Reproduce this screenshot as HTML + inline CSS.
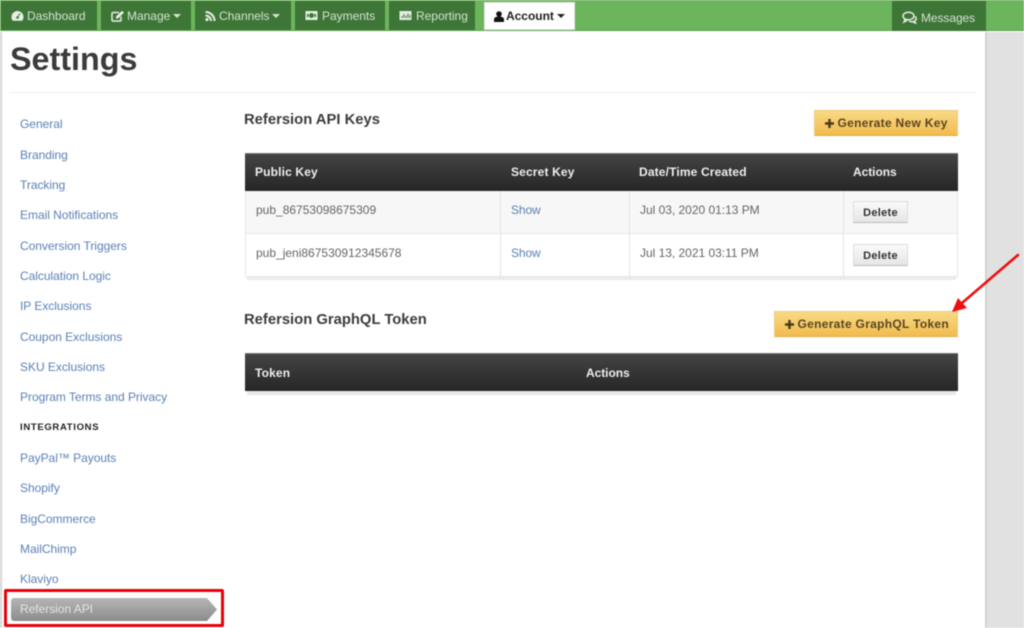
<!DOCTYPE html>
<html><head><meta charset="utf-8"><style>
*{box-sizing:border-box}
html,body{margin:0;padding:0}
body{width:1024px;height:628px;overflow:hidden;background:#fff;position:relative;font-family:"Liberation Sans",sans-serif;font-size:12px;color:#555}
#w{position:absolute;left:0;top:0;width:1024px;height:628px;filter:blur(.5px);overflow:hidden}
.a{position:absolute;white-space:nowrap}
.nb{position:absolute;top:1px;height:29px;background:#3d7636;color:#d5e3d3;line-height:31px;font-size:12px;letter-spacing:-.02px;white-space:nowrap}
.nb svg{position:absolute;top:9px}
.nb span{position:absolute;top:0}
.car{display:inline-block;border-left:4px solid transparent;border-right:4px solid transparent;border-top:4px solid currentColor;vertical-align:2px;margin-left:3px}
.sl{position:absolute;left:20px;color:#5b80b5;font-size:12px;line-height:16px;letter-spacing:-.03px;white-space:nowrap}
.th{position:absolute;top:-1px;line-height:38px;color:#eee;font-weight:bold;font-size:12px;letter-spacing:.15px;white-space:nowrap}
.hd{position:absolute;height:38px;background:linear-gradient(#444,#262626);border-top:1px solid #777}
.td{position:absolute;font-size:12px;color:#666;white-space:nowrap;line-height:16px}
.btn{position:absolute;background:linear-gradient(#f8da87,#f2bb4e);border:1px solid #eecb7c;border-bottom-color:#e0ac45;color:#5a4520;font-weight:bold;font-size:12px;letter-spacing:.3px;white-space:nowrap;text-align:center}
.btn svg{position:absolute;top:7px}
.btn span{position:absolute;top:0}
.del{position:absolute;left:853px;width:55px;height:22px;background:linear-gradient(#fafafa,#e6e6e6);border:1px solid #ddd;border-bottom-color:#bbb;color:#333;font-weight:bold;font-size:11px;line-height:22px;text-align:center;letter-spacing:.3px}
.h3{position:absolute;left:244px;font-size:14.8px;font-weight:bold;color:#3c3c3c;white-space:nowrap}
</style></head><body><div id="w">
<div class="a" style="left:0;top:0;width:1024px;height:31px;background:#6db55c;border-bottom:1px solid #5da04d"></div>
<div class="a" style="left:985px;top:32px;width:39px;height:596px;background:#e1e1e1;border-left:2px solid #d2d2d2"></div>
<div class="a" style="left:0;top:32px;width:2px;height:596px;background:#d6d6d6"></div>

<div class="nb" style="left:1px;width:96px"><svg style="left:10px" width="13" height="12" viewBox="0 0 13 12"><path d="M6.500 1a6 6 0 0 0-6 6c0 1.500.5 2.800 1.300 3.800h9.400A6 6 0 0 0 12.500 7a6 6 0 0 0-6-6z" fill="#e6eee4"/><circle cx="6.500" cy="7.500" r="1.300" fill="#3d7636"/><path d="M6.500 7.500 9 3.500" stroke="#3d7636"/></svg><span style="left:26px">Dashboard</span></div>
<div class="nb" style="left:101px;width:90px"><svg style="left:10px" width="14" height="12" viewBox="0 0 14 12"><path d="M10 6.500V10a1 1 0 0 1-1 1H2a1 1 0 0 1-1-1V3.500a1 1 0 0 1 1-1h6" fill="none" stroke="#e6eee4" stroke-width="1.500"/><path d="M5 6.500 11 .8l2 2L7 8.500H5z" fill="#e6eee4"/></svg><span style="left:26px">Manage<i class="car" style="margin-left:2.500px"></i></span></div>
<div class="nb" style="left:195px;width:96px"><svg style="left:10px" width="11" height="12" viewBox="0 0 11 12"><circle cx="2" cy="9.500" r="1.600" fill="#e6eee4"/><path d="M.5 5.500a5.500 5.500 0 0 1 5.500 5.500M.5 2a9 9 0 0 1 9 9" fill="none" stroke="#e6eee4" stroke-width="2"/></svg><span style="left:24px">Channels<i class="car" style="margin-left:2.500px"></i></span></div>
<div class="nb" style="left:295px;width:90px"><svg style="left:10px" width="13" height="11" viewBox="0 0 13 11"><rect x=".5" y="1" width="12" height="9" fill="#e6eee4"/><circle cx="6.500" cy="5.500" r="2.500" fill="#3d7636"/><rect x="2" y="4" width="1.500" height="3" fill="#3d7636"/><rect x="9.500" y="4" width="1.500" height="3" fill="#3d7636"/></svg><span style="left:27px">Payments</span></div>
<div class="nb" style="left:389px;width:86px"><svg style="left:10px" width="13" height="11" viewBox="0 0 13 11"><rect x=".5" y="1" width="12" height="9" fill="#e6eee4"/><path d="M3 8V6M5 8V4M7 8V5.500M9 8V3.500M11 8V5" stroke="#3d7636"/></svg><span style="left:27px">Reporting</span></div>
<div class="nb" style="left:484px;width:91px;background:#fff;color:#222;font-weight:bold;border:1px solid #e6e6e6;top:2px;height:28px;line-height:27px"><svg style="left:9px;top:8px" width="10" height="11" viewBox="0 0 10 11"><circle cx="5" cy="3" r="2.800" fill="#111"/><path d="M0 11V8.500C0 6.500 2 5.500 5 5.500s5 1 5 3V11z" fill="#111"/></svg><span style="left:21px">Account<i class="car"></i></span></div>
<div class="nb" style="left:892px;width:94px;height:30px;line-height:34px"><svg style="left:10px;top:10px" width="16" height="13" viewBox="0 0 16 13"><ellipse cx="6.500" cy="5" rx="5.500" ry="3.800" fill="none" stroke="#e5ede3" stroke-width="1.500"/><path d="M3 8 2 11l3.500-2M13 5.500c1.500 1 2 3-.5 4.500l1 2-3-1.300c-1.500.2-2.500 0-3.500-.7" fill="none" stroke="#e5ede3" stroke-width="1.500"/></svg><span style="left:29px;letter-spacing:-.08px">Messages</span></div>

<div class="a" style="left:10px;top:41px;font-size:32.3px;line-height:37px;font-weight:bold;color:#3b3b3b">Settings</div>
<div class="a" style="left:10px;top:92px;width:966px;height:1px;background:#eee"></div>

<div class="sl" style="top:116px">General</div>
<div class="sl" style="top:147px">Branding</div>
<div class="sl" style="top:177px">Tracking</div>
<div class="sl" style="top:207px">Email Notifications</div>
<div class="sl" style="top:237.500px">Conversion Triggers</div>
<div class="sl" style="top:268px">Calculation Logic</div>
<div class="sl" style="top:298px">IP Exclusions</div>
<div class="sl" style="top:329px">Coupon Exclusions</div>
<div class="sl" style="top:359px">SKU Exclusions</div>
<div class="sl" style="top:389px">Program Terms and Privacy</div>
<div class="sl" style="top:420px;left:20px;color:#222;font-weight:bold;font-size:9.500px;letter-spacing:.68px">INTEGRATIONS</div>
<div class="sl" style="top:450px">PayPal™ Payouts</div>
<div class="sl" style="top:480px">Shopify</div>
<div class="sl" style="top:511px">BigCommerce</div>
<div class="sl" style="top:541px">MailChimp</div>
<div class="sl" style="top:571px">Klaviyo</div>

<svg class="a" style="left:11px;top:597px" width="207" height="25" viewBox="0 0 207 25"><defs><linearGradient id="g" x1="0" y1="0" x2="0" y2="1"><stop offset="0" stop-color="#b5b5b5"/><stop offset="1" stop-color="#8c8c8c"/></linearGradient></defs><path d="M3 1H196L206 12.500 196 24H3a3 3 0 0 1-3-3V4a3 3 0 0 1 3-3z" fill="url(#g)"/></svg>
<div class="sl" style="top:601px;color:#e4e4e4">Refersion API</div>
<div class="a" style="left:4px;top:589px;width:220px;height:38px;border:3px solid #e8000b;border-radius:2px"></div>

<div class="h3" style="top:111.500px">Refersion API Keys</div>
<div class="btn" style="left:814px;top:110px;width:144px;height:26px;line-height:25px"><svg style="left:9px" width="11" height="11" viewBox="0 0 11 11"><path d="M5.500 1v9M1 5.500h9" stroke="#4a3818" stroke-width="2.400"/></svg><span style="left:22.500px">Generate New Key</span></div>

<div class="a" style="left:245px;top:191px;width:713px;height:86px;background:#fff;border:1px solid #e6e6e6;border-top:0"></div>
<div class="a" style="left:246px;top:191px;width:711px;height:43px;background:#f7f7f7;border-bottom:1px solid #e6e6e6"></div>
<div class="a" style="left:500px;top:191px;width:1px;height:86px;background:#e4e4e4"></div>
<div class="a" style="left:629px;top:191px;width:1px;height:86px;background:#e4e4e4"></div>
<div class="a" style="left:843px;top:191px;width:1px;height:86px;background:#e4e4e4"></div>
<div class="a" style="left:247px;top:277px;width:709px;height:3px;background:#ebebeb"></div>
<div class="hd" style="left:245px;top:153px;width:713px">
<div class="th" style="left:10px">Public Key</div><div class="th" style="left:266px">Secret Key</div><div class="th" style="left:394px">Date/Time Created</div><div class="th" style="left:608px;letter-spacing:-.05px">Actions</div></div>
<div class="td" style="left:256px;top:202px">pub_86753098675309</div>
<div class="td" style="left:511px;top:202px;color:#5b80b5;letter-spacing:-.1px">Show</div>
<div class="td" style="left:640px;top:202px;letter-spacing:-.02px">Jul 03, 2020 01:13 PM</div>
<div class="del" style="top:201px">Delete</div>
<div class="td" style="left:256px;top:245px">pub_jeni867530912345678</div>
<div class="td" style="left:511px;top:245px;color:#5b80b5;letter-spacing:-.1px">Show</div>
<div class="td" style="left:640px;top:245px;letter-spacing:-.02px">Jul 13, 2021 03:11 PM</div>
<div class="del" style="top:244px">Delete</div>

<div class="h3" style="top:312px">Refersion GraphQL Token</div>
<div class="btn" style="left:774px;top:311px;width:184px;height:26px;line-height:25px"><svg style="left:9px" width="11" height="11" viewBox="0 0 11 11"><path d="M5.500 1v9M1 5.500h9" stroke="#4a3818" stroke-width="2.400"/></svg><span style="left:22.500px">Generate GraphQL Token</span></div>

<div class="a" style="left:247px;top:391px;width:709px;height:4px;background:#e8e8e8"></div>
<div class="hd" style="left:245px;top:353px;width:713px">
<div class="th" style="left:10px;top:0">Token</div><div class="th" style="left:341px;top:0;letter-spacing:-.05px">Actions</div></div>

<svg class="a" style="left:940px;top:245px" width="84" height="75" viewBox="0 0 84 75"><path d="M78 10 22 58" stroke="#ee0f0f" stroke-width="2.600" stroke-linecap="round" fill="none"/><path d="M12 67 18 53 27 63z" fill="#ee0f0f"/></svg>
</div></body></html>
